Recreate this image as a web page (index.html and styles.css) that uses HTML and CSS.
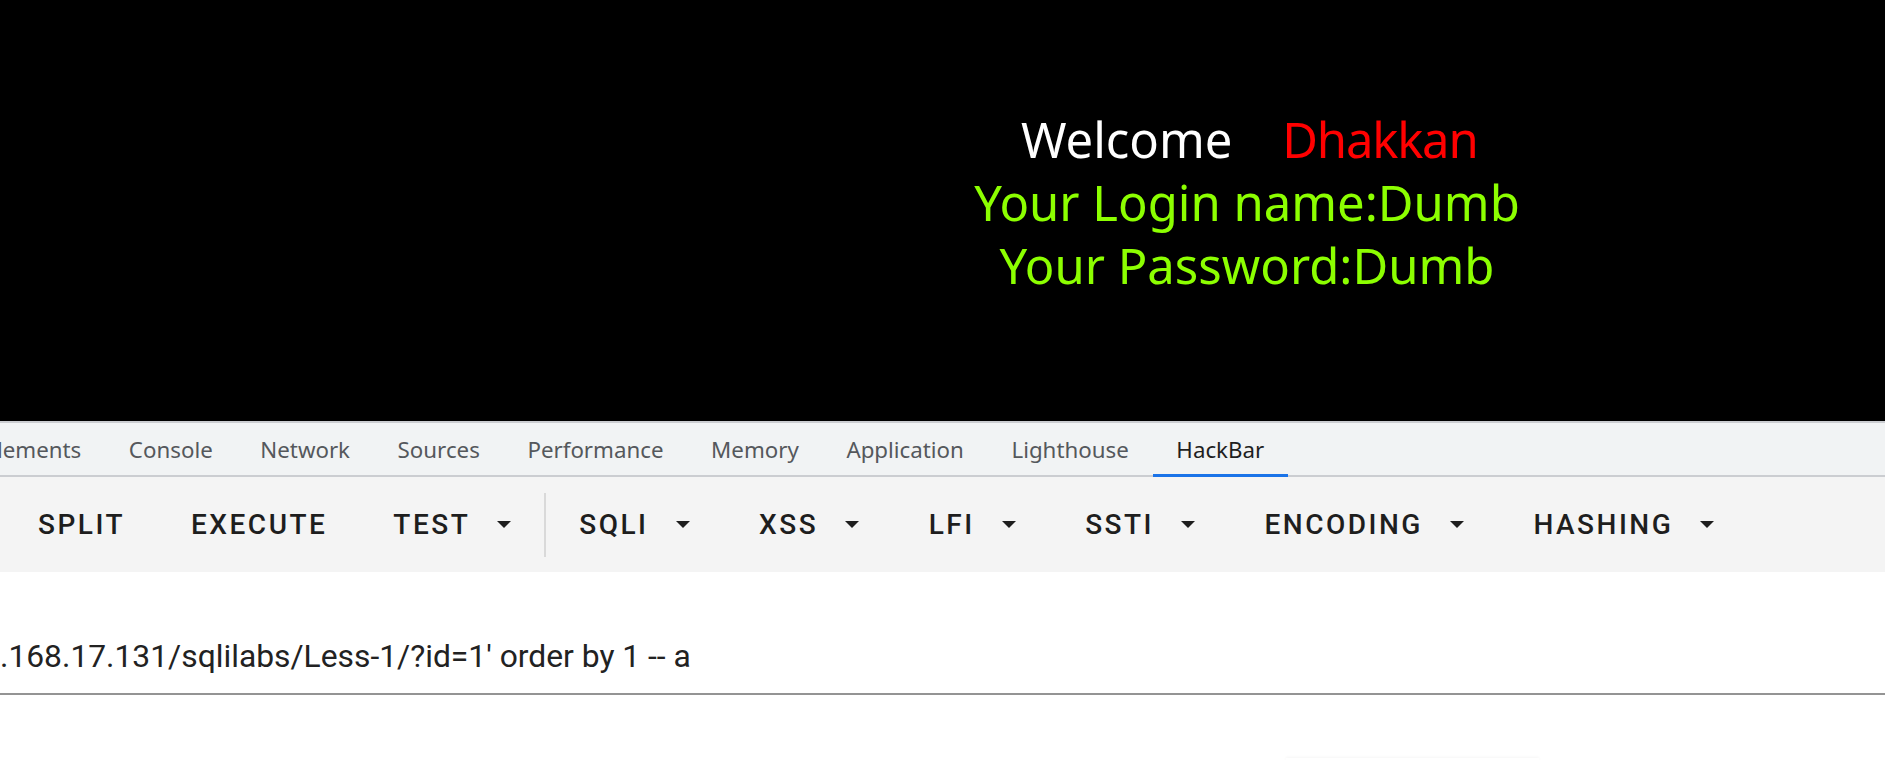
FILE: index.html
```html
<!DOCTYPE html>
<html lang="en">
<head>
<meta charset="utf-8">
<title>Less-1</title>
<link rel="stylesheet" href="styles.css">
</head>
<body>
<div class="page">
  <div class="greeting">
    <div class="line welcome">Welcome&nbsp;&nbsp;&nbsp;<span class="name"> Dhakkan </span></div>
    <div class="line green">Your Login name:Dumb</div>
    <div class="line green">Your Password:Dumb</div>
  </div>
</div>
<div class="devtools">
  <div class="tabs">
    <div class="tab first">lements</div>
    <div class="tab">Console</div>
    <div class="tab">Network</div>
    <div class="tab">Sources</div>
    <div class="tab">Performance</div>
    <div class="tab">Memory</div>
    <div class="tab">Application</div>
    <div class="tab">Lighthouse</div>
    <div class="tab active">HackBar</div>
  </div>
  <div class="toolbar">
    <div class="btn">SPLIT</div>
    <div class="btn">EXECUTE</div>
    <div class="btn">TEST<svg class="caret" viewBox="0 0 14 7"><path d="M0 0H14L7 7Z"/></svg></div>
    <div class="sep"></div>
    <div class="btn">SQLI<svg class="caret" viewBox="0 0 14 7"><path d="M0 0H14L7 7Z"/></svg></div>
    <div class="btn">XSS<svg class="caret" viewBox="0 0 14 7"><path d="M0 0H14L7 7Z"/></svg></div>
    <div class="btn">LFI<svg class="caret" viewBox="0 0 14 7"><path d="M0 0H14L7 7Z"/></svg></div>
    <div class="btn">SSTI<svg class="caret" viewBox="0 0 14 7"><path d="M0 0H14L7 7Z"/></svg></div>
    <div class="btn">ENCODING<svg class="caret" viewBox="0 0 14 7"><path d="M0 0H14L7 7Z"/></svg></div>
    <div class="btn">HASHING<svg class="caret" viewBox="0 0 14 7"><path d="M0 0H14L7 7Z"/></svg></div>
  </div>
  <div class="content">
    <div class="url">.168.17.131/sqlilabs/Less-1/?id=1' order by 1 -- a</div>
    <div class="card-edge"></div>
  </div>
</div>
</body>
</html>
```
FILE: styles.css
```css
html, body {
  margin: 0;
  padding: 0;
  background: #ffffff;
  overflow: hidden;
}
body {
  width: 1885px;
  height: 760px;
  font-family: "Noto Sans", "Open Sans", sans-serif;
}
.page {
  background: #000000;
  height: 421px;
  box-sizing: border-box;
  padding-top: 108px;
  padding-left: 609px;
}
.greeting {
  display: flex;
  flex-direction: column;
  align-items: center;
  font-size: 49px;
  line-height: 63px;
  white-space: pre;
}
.welcome {
  color: #ffffff;
  padding-left: 16px;
}
.name {
  color: #ff0000;
  letter-spacing: -1.2px;
}
.green { color: #8cff00; }

.devtools {
  display: flex;
  flex-direction: column;
}
.tabs {
  display: flex;
  height: 52px;
  background: #f1f3f4;
  border-top: 2px solid #cbcdd1;
  border-bottom: 2px solid #cbcdd1;
  font-family: "Noto Sans", "Open Sans", sans-serif;
  font-size: 22.3px;
  color: #55585c;
}
.tab {
  display: flex;
  align-items: center;
  padding: 0 23.8px;
  border-bottom: 3px solid transparent;
  margin-bottom: -2px;
  padding-top: 2px;
}
.tab.first { padding-left: 0; margin-left: -3px; }
.tab.active {
  color: #1f1f1f;
  border-bottom-color: #1a73e8;
}
.toolbar {
  display: flex;
  align-items: center;
  height: 95px;
  background: #f4f4f4;
  padding-left: 5px;
}
.btn {
  display: flex;
  align-items: center;
  padding: 0 33px;
  font-family: Roboto, sans-serif;
  font-weight: 500;
  font-size: 28px;
  letter-spacing: 2.5px;
  color: #1e1e1e;
}
.caret {
  width: 14px;
  height: 7px;
  margin-left: 27px;
  margin-right: 3.5px;
  fill: #1e1e1e;
}
.sep {
  width: 2px;
  height: 64px;
  margin-left: -3.5px;
  background: #d9d9d9;
}
.content {
  display: flex;
  flex-direction: column;
}
.url {
  margin-top: 64px;
  font-family: Roboto, sans-serif;
  font-size: 31.8px;
  line-height: 40px;
  color: #222222;
  padding-bottom: 17px;
  border-bottom: 2px solid #949494;
  white-space: pre;
}
.card-edge {
  margin-top: 63px;
  margin-left: 1286px;
  width: 253px;
  height: 4px;
  box-shadow: 0 -1px 3px rgba(0,0,0,0.04);
}
```
